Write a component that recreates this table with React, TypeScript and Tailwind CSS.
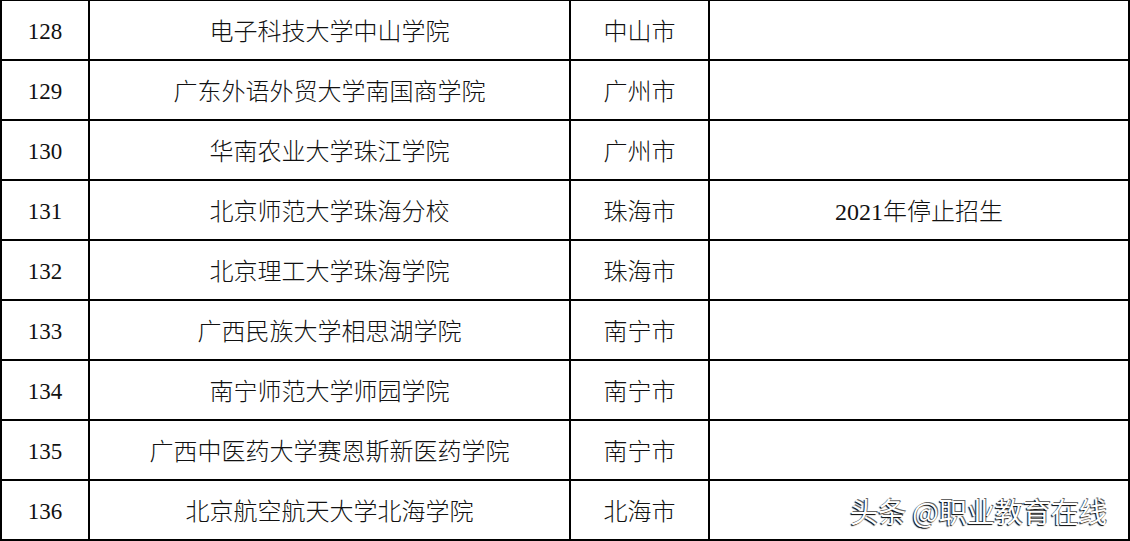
import React from "react";

const rows: [string, string, string, string][] = [
  ["128", "电子科技大学中山学院", "中山市", ""],
  ["129", "广东外语外贸大学南国商学院", "广州市", ""],
  ["130", "华南农业大学珠江学院", "广州市", ""],
  ["131", "北京师范大学珠海分校", "珠海市", "2021年停止招生"],
  ["132", "北京理工大学珠海学院", "珠海市", ""],
  ["133", "广西民族大学相思湖学院", "南宁市", ""],
  ["134", "南宁师范大学师园学院", "南宁市", ""],
  ["135", "广西中医药大学赛恩斯新医药学院", "南宁市", ""],
  ["136", "北京航空航天大学北海学院", "北海市", ""],
];

export default function App() {
  return (
    <div className="relative w-[1130px] h-[541px] bg-white overflow-hidden">
      <div
        className="border-t border-l-2 border-r-2 border-black text-[24px] font-light text-[#111] w-[1130px]"
        style={{ fontFamily: '"Liberation Serif", "Noto Sans CJK SC", serif' }}
      >
        {rows.map((r) => (
          <div
            key={r[0]}
            className="grid grid-cols-[88px_481px_139px_1fr] h-[60px] border-b-2 border-black"
          >
            <div className="flex items-center justify-center pt-1 border-r-2 border-black text-[23px]">
              {r[0]}
            </div>
            <div className="flex items-center justify-center pt-1 border-r-2 border-black">
              {r[1]}
            </div>
            <div className="flex items-center justify-center pt-1 border-r-2 border-black">
              {r[2]}
            </div>
            <div className="flex items-center justify-center pt-1">{r[3]}</div>
          </div>
        ))}
      </div>
      <div
        className="absolute left-[850px] top-[493px] text-[28px] leading-[36px] text-white whitespace-nowrap [text-shadow:-1px_1px_1px_#000,1px_-1px_0_#666]"
        style={{ fontFamily: '"Noto Sans CJK SC", "Noto Sans", sans-serif' }}
      >
        头条 @职业教育在线
      </div>
    </div>
  );
}
